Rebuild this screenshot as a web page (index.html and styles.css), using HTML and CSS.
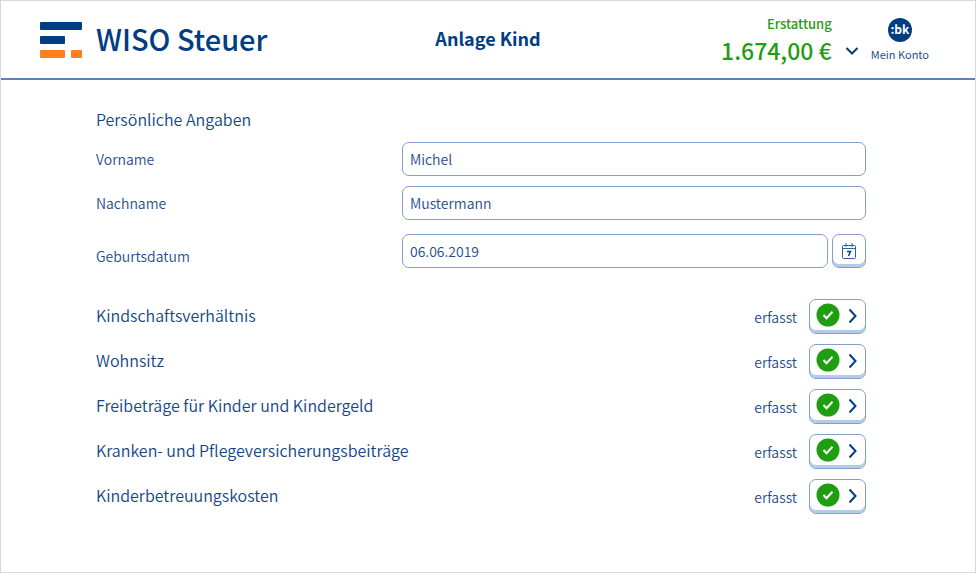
FILE: index.html
```html
<!DOCTYPE html>
<html lang="de">

<head>
    <meta charset="UTF-8">
    <meta name="viewport" content="width=device-width, initial-scale=1.0">
    <title>Anlage Kind</title>
    <link rel="stylesheet" href="styles.css">
</head>

<body>
    <svg class="sprite" aria-hidden="true">
        <symbol id="check" viewBox="0 0 24 24">
            <circle cx="12" cy="12" r="11.5" fill="#1e9e10" />
            <path d="M7.5 12l3 3.2 6-6.4" fill="none" stroke="#fff" stroke-width="2" />
        </symbol>
        <symbol id="arrow" viewBox="0 0 10 16">
            <path d="M1.5 2.5L7.5 9l-6 6.500" fill="none" stroke="#003d82" stroke-width="2" />
        </symbol>
    </svg>

    <header class="header">
        <div class="logo">
            <svg width="42" height="36" viewBox="0 0 42 36" aria-hidden="true">
                <rect width="42" height="8" rx="1" fill="#003d82" />
                <rect y="14" width="25" height="8" rx="1" fill="#003d82" />
                <rect y="28" width="25" height="8" rx="1" fill="#ff7f1e" />
                <rect x="31" y="28" width="11" height="8" rx="1" fill="#ff7f1e" />
            </svg>
            <span class="logo-text">WISO Steuer</span>
        </div>

        <h1>Anlage Kind</h1>

        <div class="header-right">
            <div class="refund">
                <div class="refund-label">Erstattung</div>
                <div class="refund-amount">1.674,00 €</div>
            </div>
            <button type="button" class="toggle" aria-label="Details">
                <svg width="14" height="10" viewBox="0 0 14 10"><path d="M1.5 2L7 7.500l5.500-5.500" fill="none" stroke="#003d82" stroke-width="2" /></svg>
            </button>
            <a class="account" href="#">
                <span class="avatar">:bk</span>
                <span>Mein Konto</span>
            </a>
        </div>
    </header>

    <main class="content">
        <form>
            <h2>Persönliche Angaben</h2>
            <div class="field">
                <label for="vorname">Vorname</label>
                <input type="text" id="vorname" name="vorname" value="Michel">
            </div>
            <div class="field">
                <label for="nachname">Nachname</label>
                <input type="text" id="nachname" name="nachname" value="Mustermann">
            </div>
            <div class="field field-date">
                <label for="geburtsdatum">Geburtsdatum</label>
                <input type="text" id="geburtsdatum" name="geburtsdatum" value="06.06.2019">
                <button type="button" class="key calendar" aria-label="Kalender">
                    <svg width="14" height="16" viewBox="0 0 14 16" fill="none" stroke="#2f5f9c">
                        <rect x="0.500" y="2.500" width="13" height="13" rx="1" />
                        <path d="M0.500 5.500h13M4 0v4M10 0v4" />
                        <path d="M5 8.500h3.500L6.500 13" stroke="#003d82" stroke-width="1.500" />
                    </svg>
                </button>
            </div>
        </form>

        <ul class="sections">
            <li>
                <span class="section-name">Kindschaftsverhältnis</span>
                <span class="status">erfasst</span>
                <button type="button" class="key open" aria-label="Kindschaftsverhältnis öffnen">
                    <svg width="24" height="24"><use href="#check" /></svg>
                    <svg width="10" height="16"><use href="#arrow" /></svg>
                </button>
            </li>
            <li>
                <span class="section-name">Wohnsitz</span>
                <span class="status">erfasst</span>
                <button type="button" class="key open" aria-label="Wohnsitz öffnen">
                    <svg width="24" height="24"><use href="#check" /></svg>
                    <svg width="10" height="16"><use href="#arrow" /></svg>
                </button>
            </li>
            <li>
                <span class="section-name">Freibeträge für Kinder und Kindergeld</span>
                <span class="status">erfasst</span>
                <button type="button" class="key open" aria-label="Freibeträge öffnen">
                    <svg width="24" height="24"><use href="#check" /></svg>
                    <svg width="10" height="16"><use href="#arrow" /></svg>
                </button>
            </li>
            <li>
                <span class="section-name">Kranken- und Pflegeversicherungsbeiträge</span>
                <span class="status">erfasst</span>
                <button type="button" class="key open" aria-label="Versicherungsbeiträge öffnen">
                    <svg width="24" height="24"><use href="#check" /></svg>
                    <svg width="10" height="16"><use href="#arrow" /></svg>
                </button>
            </li>
            <li>
                <span class="section-name">Kinderbetreuungskosten</span>
                <span class="status">erfasst</span>
                <button type="button" class="key open" aria-label="Kinderbetreuungskosten öffnen">
                    <svg width="24" height="24"><use href="#check" /></svg>
                    <svg width="10" height="16"><use href="#arrow" /></svg>
                </button>
            </li>
        </ul>
    </main>
</body>

</html>
```
FILE: styles.css
```css
* {
    box-sizing: border-box;
}

body {
    margin: 0;
    min-height: 100vh;
    border: 1px solid #d8d8d8;
    background-color: #ffffff;
    color: #1f4e8c;
    font-family: "Noto Sans CJK SC", "Open Sans", sans-serif;
    font-size: 14px;
    font-weight: 350;
    line-height: 20px;
}

svg {
    display: block;
    flex: none;
}

.sprite {
    position: absolute;
    width: 0;
    height: 0;
}

button {
    padding: 0;
    border: none;
    background: none;
    cursor: pointer;
}

.header {
    display: grid;
    grid-template-columns: 1fr auto 1fr;
    align-items: center;
    padding: 13px 46px 12px 39px;
    border-bottom: 2px solid #5b83b8;
    color: #003d82;
}

.logo {
    display: flex;
    align-items: center;
    gap: 14px;
}

.logo-text {
    padding-bottom: 4px;
    font-size: 29px;
    font-weight: 500;
    line-height: 32px;
}

h1 {
    margin: 0;
    padding: 0 0 4px 7px;
    font-size: 18px;
    font-weight: 700;
    line-height: 22px;
}

.header-right {
    display: flex;
    align-items: center;
    justify-content: flex-end;
}

.refund {
    color: #1e9e10;
    text-align: right;
}

.refund-label {
    font-size: 13px;
    font-weight: 500;
    line-height: 20px;
}

.refund-amount {
    font-size: 23px;
    font-weight: 500;
    line-height: 32px;
}

.toggle {
    align-self: flex-end;
    margin: 0 12px 10px 13px;
}

.account {
    display: flex;
    flex-direction: column;
    align-items: center;
    gap: 4px;
    color: #1f4e8c;
    font-size: 11px;
    font-weight: 400;
    line-height: 16px;
    text-decoration: none;
}

.avatar {
    width: 24px;
    height: 24px;
    border-radius: 50%;
    background-color: #003d82;
    color: #ffffff;
    font-size: 12px;
    font-weight: 700;
    line-height: 22px;
    text-align: center;
}

.content {
    padding: 28px 109px 28px 95px;
}

h2 {
    margin: 0 0 12px;
    color: #134686;
    font-size: 16px;
    font-weight: 350;
    line-height: 22px;
}

.field {
    display: flex;
    align-items: center;
    margin-bottom: 10px;
}

.field-date {
    align-items: flex-end;
    margin-top: 14px;
    gap: 4px;
}

label {
    flex: none;
    width: 306px;
}

.field-date label {
    width: 302px;
    padding-bottom: 2px;
}

input {
    flex: 1;
    min-width: 0;
    height: 34px;
    padding: 0 7px;
    border: 1px solid #82a0cb;
    border-radius: 7px;
    background-color: #ffffff;
    color: #1f4e8c;
    font: inherit;
}

/* raised buttons with a light blue lower edge */
.key {
    display: flex;
    align-items: center;
    border: 1px solid #82a0cb;
    border-radius: 7px;
    box-shadow: inset 0 -3px 0 #b5cbe6;
}

.calendar {
    justify-content: center;
    width: 34px;
    height: 34px;
}

.sections {
    display: grid;
    gap: 10px;
    margin: 31px 0 0;
    padding: 0;
    list-style: none;
}

.sections li {
    display: flex;
    align-items: center;
    gap: 12px;
}

.section-name {
    flex: 1;
    padding-bottom: 4px;
    color: #134686;
    font-size: 16px;
}

.open {
    gap: 8px;
    width: 57px;
    height: 35px;
    padding: 0 6px 3px;
}
```
